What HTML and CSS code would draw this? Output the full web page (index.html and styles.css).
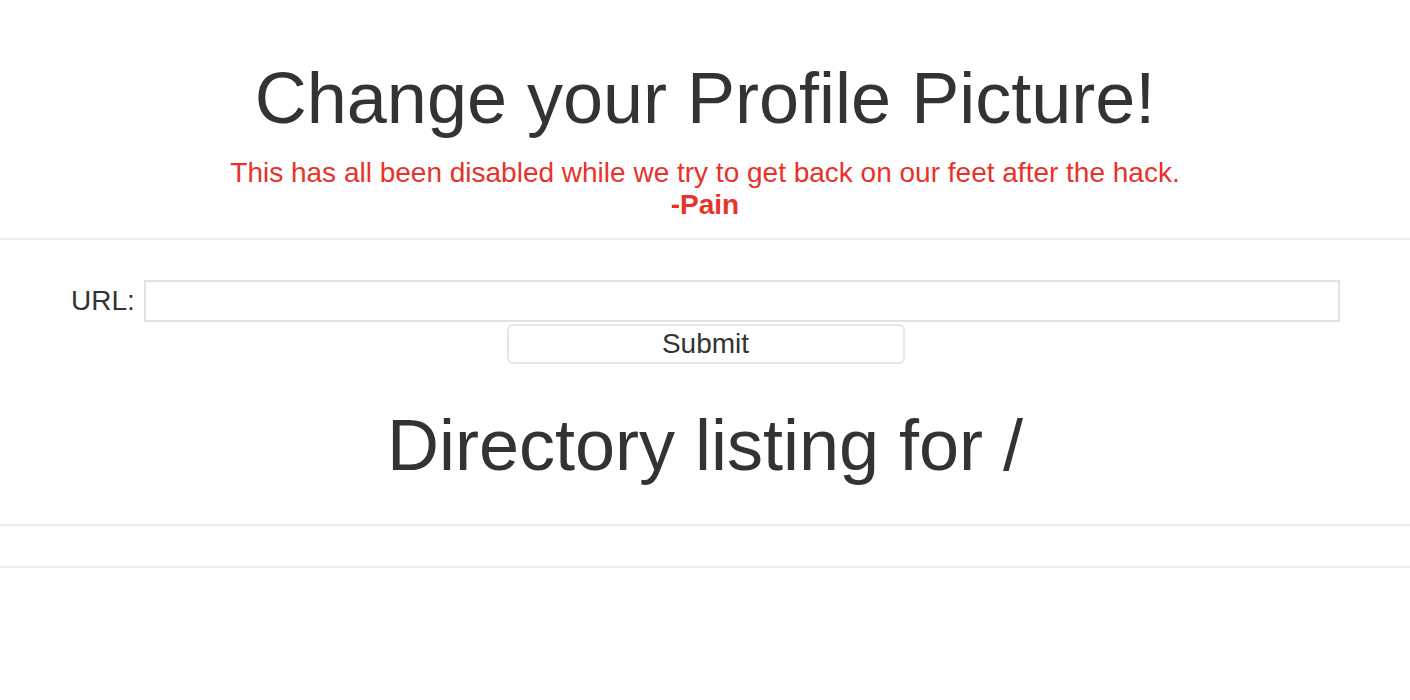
FILE: index.html
```html
<!DOCTYPE html>
<html>
<head>
<meta charset="utf-8">
<link rel="stylesheet" href="styles.css">
</head>
<body>
<header class="header">
  <h1 class="title">Change your Profile Picture!</h1>
  <p class="notice">This has all been disabled while we try to get back on our feet after the hack.<br><strong>-Pain</strong></p>
</header>
<hr class="rule">
<form class="form">
  <div class="field">
    <label class="label" for="url">URL:</label>
    <input class="input" id="url" type="text">
  </div>
  <button class="submit" type="button">Submit</button>
</form>
<h1 class="listing">Directory listing for /</h1>
<hr class="rule">
<div class="empty-row"></div>
<hr class="rule">
</body>
</html>
```
FILE: styles.css
```css
html, body {
  margin: 0;
  padding: 0;
  background: #fff;
}
body {
  font-family: "Liberation Sans", Arial, Helvetica, sans-serif;
  color: #333;
}
.header {
  text-align: center;
  padding-top: 58px;
}
.title {
  margin: 0;
  font-size: 72px;
  font-weight: normal;
  line-height: 80px;
}
.notice {
  margin: 19px 0 0 0;
  color: #e8322a;
  font-size: 28px;
  line-height: 32px;
}
.notice strong {
  font-weight: bold;
}
.rule {
  margin: 0;
  border: 0;
  border-top: 2px solid #eee;
}
.header + .rule {
  margin-top: 17px;
}
.form {
  display: flex;
  flex-direction: column;
  align-items: center;
  padding: 40px 70px 0 71px;
}
.field {
  display: flex;
  align-items: center;
  gap: 9px;
  width: 100%;
}
.label {
  font-size: 28px;
}
.input {
  flex: 1;
  height: 42px;
  box-sizing: border-box;
  border: 2px solid #e2e2e2;
  border-radius: 0;
  font-size: 24px;
  padding: 0 8px;
  margin: 0;
}
.submit {
  margin-top: 2px;
  width: 398px;
  height: 40px;
  box-sizing: border-box;
  background: #fff;
  border: 2px solid #e6e6e6;
  border-radius: 6px;
  font-family: "Liberation Sans", Arial, Helvetica, sans-serif;
  font-size: 28px;
  line-height: 36px;
  color: #333;
  padding: 0;
}
.listing {
  margin: 41px 0 0 0;
  text-align: center;
  font-size: 72px;
  font-weight: normal;
  line-height: 80px;
  padding-bottom: 39px;
}
.empty-row {
  height: 40px;
}
```
